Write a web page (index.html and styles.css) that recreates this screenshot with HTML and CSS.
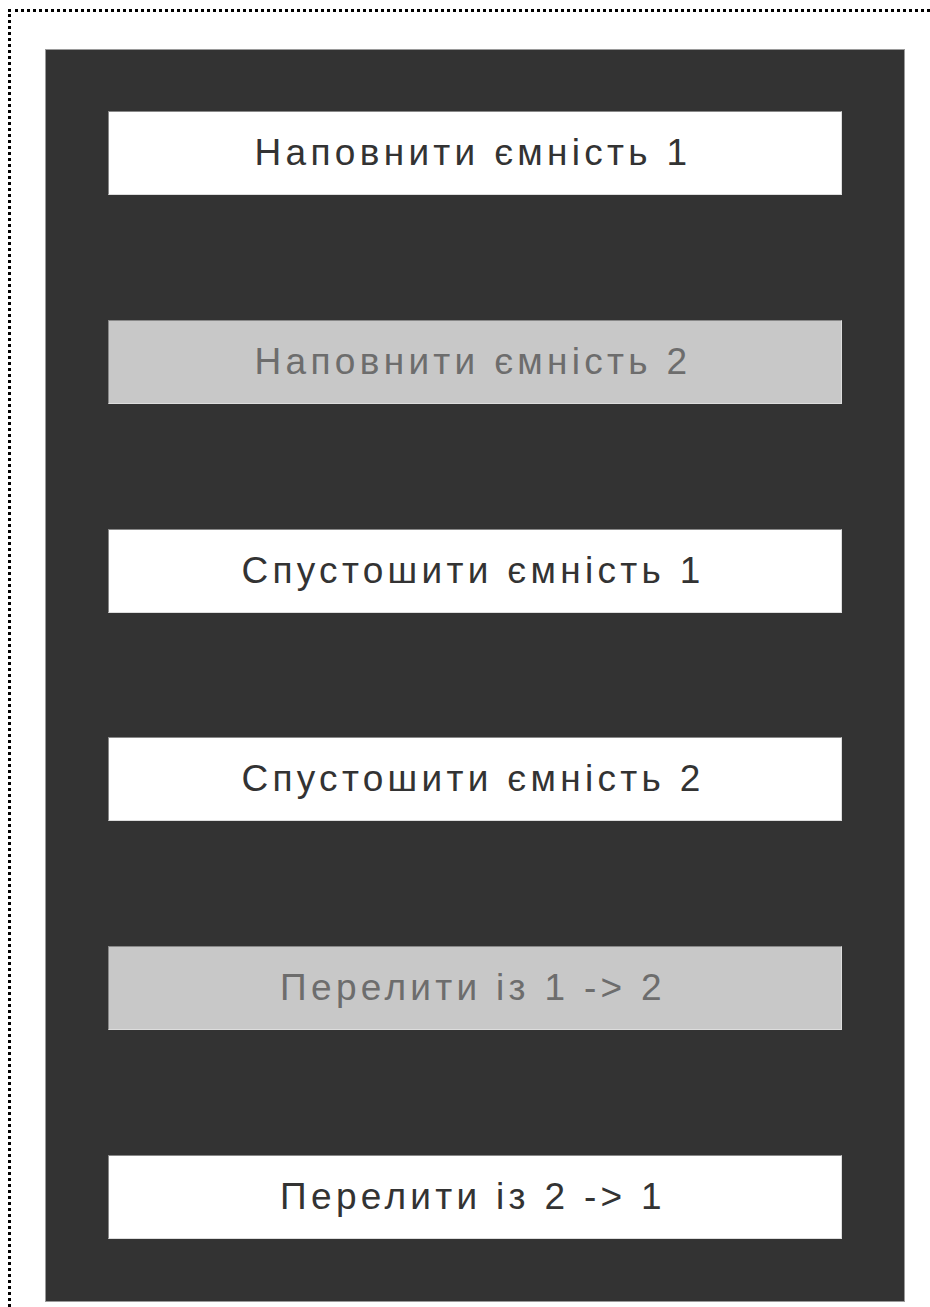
FILE: index.html
```html
<!DOCTYPE html>
<html lang="uk">
<head>
<meta charset="utf-8">
<title>Ємності</title>
<link rel="stylesheet" href="styles.css">
</head>
<body>
<div class="frame">
  <div class="panel">
    <button class="action" type="button">Наповнити ємність 1</button>
    <button class="action" type="button" disabled>Наповнити ємність 2</button>
    <button class="action" type="button">Спустошити ємність 1</button>
    <button class="action" type="button">Спустошити ємність 2</button>
    <button class="action" type="button" disabled>Перелити із 1 -&gt; 2</button>
    <button class="action" type="button">Перелити із 2 -&gt; 1</button>
  </div>
</div>
</body>
</html>
```
FILE: styles.css
```css
html, body {
  overflow: hidden;
}

body {
  margin: 9px 0 0 8px;
  background: #fff;
  font-family: "Liberation Sans", Arial, sans-serif;
}

.frame {
  width: 1000px;
  height: 1400px;
  border: 3px dotted #000;
  padding: 37px 0 0 34px;
  box-sizing: border-box;
}

.panel {
  width: 860px;
  height: 1253px;
  box-sizing: border-box;
  background: #333;
  border: 1px solid #9a9a9a;
  padding: 61px 62px 62px;
  display: flex;
  flex-direction: column;
  justify-content: space-between;
}

.action {
  height: 84px;
  background: #fff;
  border: 1px solid #888;
  border-right-color: #ddd;
  border-bottom-color: #ddd;
  color: #333;
  font-family: inherit;
  font-size: 37px;
  letter-spacing: 4.3px;
  padding: 0 4px 0 0;
  cursor: pointer;
}

.action:disabled {
  background: #c8c8c8;
  color: #6d6d6d;
  cursor: default;
}
```
